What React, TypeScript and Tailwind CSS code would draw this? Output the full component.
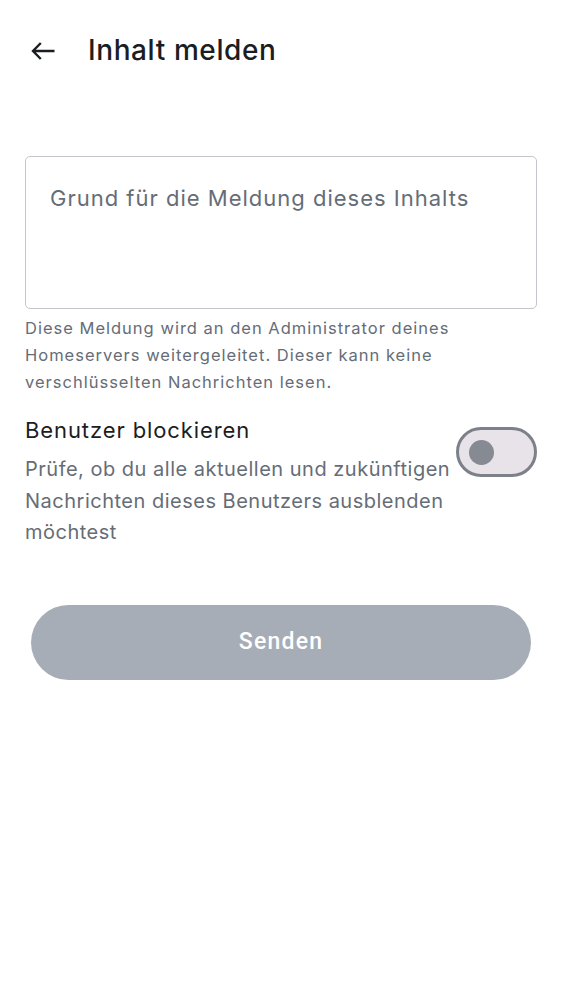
import React from "react";

export default function App() {
  return (
    <div className="w-[562px] h-[1000px] bg-white" style={{ fontFamily: "Inter, Roboto, sans-serif" }}>
      <div className="flex items-center h-[100px] pl-[31px] pr-[28px] pb-[1px]">
        <svg width="24" height="24" viewBox="0 0 24 24" className="text-[#1b1d22] mt-[3px]">
          <path d="M2 12H23.5M9.8 4L2 12l7.8 8" fill="none" stroke="currentColor" strokeWidth="2.4" strokeLinecap="butt" strokeLinejoin="miter" />
        </svg>
        <h1 className="ml-[33px] text-[28px] font-medium text-[#1b1d22] tracking-[0.6px]">Inhalt melden</h1>
      </div>
      <div className="px-[25px] pt-[56px]">
        <div className="h-[153px] border border-[#c3c6cc] rounded-[5px] px-[24px] pt-[25px]">
          <span className="text-[22px] text-[#656d77] tracking-[1px]">Grund für die Meldung dieses Inhalts</span>
        </div>
        <p className="mt-[6px] text-[16.5px] leading-[27px] text-[#656d77] tracking-[1px] pr-[20px]">
          Diese Meldung wird an den Administrator deines Homeservers weitergeleitet. Dieser kann keine verschlüsselten Nachrichten lesen.
        </p>
        <div className="flex mt-[20px]">
          <div className="flex-1">
            <div className="text-[22px] leading-[28px] text-[#1b1d22] tracking-[0.9px]">Benutzer blockieren</div>
            <p className="mt-[10px] text-[20px] leading-[31.5px] text-[#656d77] tracking-[0.5px]">
              Prüfe, ob du alle aktuellen und zukünftigen Nachrichten dieses Benutzers ausblenden möchtest
            </p>
          </div>
          <div className="mt-[11px] w-[81px] h-[50px] rounded-full border-[3px] border-[#7c8089] bg-[#e8e2e9] flex items-center pl-[10px] shrink-0">
            <div className="w-[25px] h-[25px] rounded-full bg-[#858a93]" />
          </div>
        </div>
        <div className="mt-[56px] mx-[6px] h-[75px] rounded-full bg-[#a7adb6] flex items-center justify-center">
          <span className="text-[23px] font-medium text-white tracking-[1.2px]" style={{ fontFamily: "Roboto, sans-serif" }}>Senden</span>
        </div>
      </div>
    </div>
  );
}
